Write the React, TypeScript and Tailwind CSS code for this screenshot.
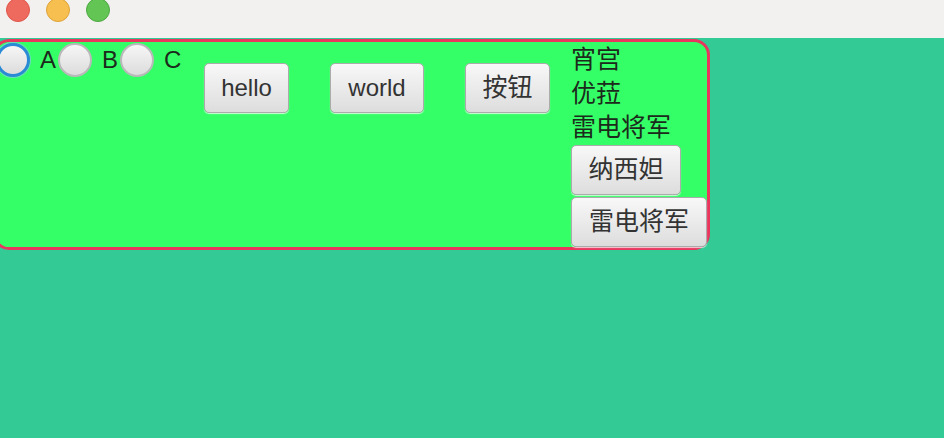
import React from "react";

const font = { fontFamily: '"Liberation Sans", "Noto Sans CJK SC", sans-serif' };

function Radio({ label, focused }: { label: string; focused?: boolean }) {
  return (
    <div className="flex w-[62px] shrink-0 items-center gap-[10px]">
      <span
        className={
          focused
            ? "h-[34px] w-[34px] shrink-0 rounded-full border-[3px] border-[#2b8ad6] bg-gradient-to-b from-[#f6f6f6] to-[#dcdcdc] shadow-[0_0_0_1px_rgba(140,200,240,0.7)]"
            : "h-[34px] w-[34px] shrink-0 rounded-full border-2 border-[#b9b9b9] bg-gradient-to-b from-[#f6f6f6] to-[#dcdcdc]"
        }
      />
      <span className="text-[24px] leading-[26px] text-[#1c2a1c]">{label}</span>
    </div>
  );
}

function Btn({ children, w, cls = "" }: { children: React.ReactNode; w: string; cls?: string }) {
  return (
    <button
      className={`${w} ${cls} flex h-[50px] shrink-0 items-center justify-center rounded-[5px] border border-[#ababab] bg-gradient-to-b from-[#f8f8f8] to-[#dddddd] text-[#333] shadow-[0_1px_1px_rgba(255,255,255,0.75)]`}
    >
      {children}
    </button>
  );
}

export default function App() {
  return (
    <div className="h-[438px] w-[944px] overflow-hidden bg-[#33ca96]" style={font}>
      <div className="flex h-[38px] items-start gap-4 bg-[#f2f1f0] pl-[6px]">
        <span className="mt-[-2px] h-6 w-6 rounded-full border border-[#e0554a] bg-[#ef6a5e]" />
        <span className="mt-[-2px] h-6 w-6 rounded-full border border-[#dea33a] bg-[#f6bf4f]" />
        <span className="mt-[-2px] h-6 w-6 rounded-full border border-[#4ea843] bg-[#62c554]" />
      </div>
      <div className="ml-[-7px] mt-px flex w-fit items-start rounded-[16px] border-[3px] border-[#e8365f] bg-[#35ff66]">
        <div className="mt-px flex">
          <Radio label="A" focused />
          <Radio label="B" />
          <Radio label="C" />
        </div>
        <Btn w="w-[85px]" cls="ml-[22px] mt-[21px] text-[24px]">hello</Btn>
        <Btn w="w-[94px]" cls="ml-[41px] mt-[21px] text-[24px]">world</Btn>
        <Btn w="w-[85px]" cls="ml-[41px] mt-[21px] text-[25px]">按钮</Btn>
        <div className="ml-[21px] flex flex-col items-start">
          <span className="text-[25px] leading-[34px] text-[#1c2a1c]">宵宫</span>
          <span className="text-[25px] leading-[34px] text-[#1c2a1c]">优菈</span>
          <span className="text-[25px] leading-[34px] text-[#1c2a1c]">雷电将军</span>
          <Btn w="w-[110px]" cls="mt-px text-[25px]">纳西妲</Btn>
          <Btn w="w-[136px]" cls="mt-[2px] text-[25px]">雷电将军</Btn>
        </div>
      </div>
    </div>
  );
}
